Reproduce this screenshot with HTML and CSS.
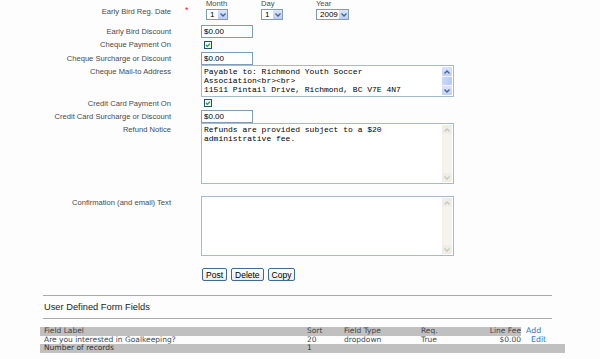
FILE: index.html
```html
<!DOCTYPE html>
<html lang="en">
<head>
    <meta charset="UTF-8">
    <meta name="viewport" content="width=device-width, initial-scale=1.0">
    <link rel="stylesheet" href="styles.css">
    <title>Program Settings</title>
</head>
<body>
    <div class="form">
        <div class="row row-date">
            <div class="label">Early Bird Reg. Date</div>
            <div class="req">*</div>
            <div class="field date-field">
                <div class="date-part part-month">
                    <div class="date-cap">Month</div>
                    <span class="select sel-small"><span class="sel-val">1</span><span class="sel-btn"><svg width="6" height="4" viewBox="0 0 6 4"><path d="M0.5 0.5 L3 3 L5.5 0.5" fill="none" stroke="#4d6185" stroke-width="1.3"/></svg></span></span>
                </div>
                <div class="date-part part-day">
                    <div class="date-cap">Day</div>
                    <span class="select sel-small"><span class="sel-val">1</span><span class="sel-btn"><svg width="6" height="4" viewBox="0 0 6 4"><path d="M0.5 0.5 L3 3 L5.5 0.5" fill="none" stroke="#4d6185" stroke-width="1.3"/></svg></span></span>
                </div>
                <div class="date-part part-year">
                    <div class="date-cap">Year</div>
                    <span class="select sel-year"><span class="sel-val">2009</span><span class="sel-btn"><svg width="6" height="4" viewBox="0 0 6 4"><path d="M0.5 0.5 L3 3 L5.5 0.5" fill="none" stroke="#4d6185" stroke-width="1.3"/></svg></span></span>
                </div>
            </div>
        </div>

        <div class="row row-input">
            <div class="label">Early Bird Discount</div>
            <div class="req"></div>
            <div class="field"><span class="input">$0.00</span></div>
        </div>

        <div class="row row-check">
            <div class="label">Cheque Payment On</div>
            <div class="req"></div>
            <div class="field"><span class="check"><svg width="8" height="8" viewBox="0 0 8 8"><rect x="0.5" y="0.5" width="7" height="7" fill="#f4f4f0" stroke="#1c5180"/><path d="M2 4 L3.4 5.4 L6 2.6" fill="none" stroke="#21a121" stroke-width="1.3"/></svg></span></div>
        </div>

        <div class="row row-input">
            <div class="label">Cheque Surcharge or Discount</div>
            <div class="req"></div>
            <div class="field"><span class="input">$0.00</span></div>
        </div>

        <div class="row row-area area-small">
            <div class="label">Cheque Mail-to Address</div>
            <div class="req"></div>
            <div class="field">
                <div class="area">
                    <div class="area-text">Payable to: Richmond Youth Soccer<br>Association&lt;br&gt;&lt;br&gt;<br>11511 Pintail Drive, Richmond, BC V7E 4N7</div>
                    <div class="scroll">
                        <span class="sbtn"><svg width="6" height="4" viewBox="0 0 6 4"><path d="M0.5 3.5 L3 1 L5.5 3.5" fill="none" stroke="#4d6185" stroke-width="1.3"/></svg></span>
                        <span class="thumb"></span>
                        <span class="sbtn"><svg width="6" height="4" viewBox="0 0 6 4"><path d="M0.5 0.5 L3 3 L5.5 0.5" fill="none" stroke="#4d6185" stroke-width="1.3"/></svg></span>
                    </div>
                </div>
            </div>
        </div>

        <div class="row row-check2">
            <div class="label">Credit Card Payment On</div>
            <div class="req"></div>
            <div class="field"><span class="check"><svg width="8" height="8" viewBox="0 0 8 8"><rect x="0.5" y="0.5" width="7" height="7" fill="#f4f4f0" stroke="#1c5180"/><path d="M2 4 L3.4 5.4 L6 2.6" fill="none" stroke="#21a121" stroke-width="1.3"/></svg></span></div>
        </div>

        <div class="row row-input">
            <div class="label">Credit Card Surcharge or Discount</div>
            <div class="req"></div>
            <div class="field"><span class="input">$0.00</span></div>
        </div>

        <div class="row row-area area-large">
            <div class="label">Refund Notice</div>
            <div class="req"></div>
            <div class="field">
                <div class="area">
                    <div class="area-text">Refunds are provided subject to a $20<br>administrative fee.</div>
                    <div class="scroll off">
                        <span class="sbtn"><svg width="6" height="4" viewBox="0 0 6 4"><path d="M0.5 3.5 L3 1 L5.5 3.5" fill="none" stroke="#c9c7ba" stroke-width="1.3"/></svg></span>
                        <span class="track"></span>
                        <span class="sbtn"><svg width="6" height="4" viewBox="0 0 6 4"><path d="M0.5 0.5 L3 3 L5.5 0.5" fill="none" stroke="#c9c7ba" stroke-width="1.3"/></svg></span>
                    </div>
                </div>
            </div>
        </div>

        <div class="row row-spacer"></div>

        <div class="row row-area area-conf">
            <div class="label">Confirmation (and email) Text</div>
            <div class="req"></div>
            <div class="field">
                <div class="area">
                    <div class="area-text"></div>
                    <div class="scroll off">
                        <span class="sbtn"><svg width="6" height="4" viewBox="0 0 6 4"><path d="M0.5 3.5 L3 1 L5.5 3.5" fill="none" stroke="#c9c7ba" stroke-width="1.3"/></svg></span>
                        <span class="track"></span>
                        <span class="sbtn"><svg width="6" height="4" viewBox="0 0 6 4"><path d="M0.5 0.5 L3 3 L5.5 0.5" fill="none" stroke="#c9c7ba" stroke-width="1.3"/></svg></span>
                    </div>
                </div>
            </div>
        </div>

        <div class="row row-spacer"></div>

        <div class="row row-buttons">
            <div class="label"></div>
            <div class="req"></div>
            <div class="field buttons">
                <button class="btn">Post</button>
                <button class="btn">Delete</button>
                <button class="btn">Copy</button>
            </div>
        </div>
    </div>

    <div class="udf">
        <div class="rule"></div>
        <div class="udf-title">User Defined Form Fields</div>
        <div class="rule"></div>

        <table class="udf-table">
            <tr class="head">
                <td class="c-label">Field Label</td>
                <td class="c-sort">Sort</td>
                <td class="c-type">Field Type</td>
                <td class="c-req">Req.</td>
                <td class="c-fee">Line Fee</td>
                <td class="c-act"><a href="#" class="add">Add</a></td>
            </tr>
            <tr>
                <td class="c-label">Are you interested in Goalkeeping?</td>
                <td class="c-sort">20</td>
                <td class="c-type">dropdown</td>
                <td class="c-req">True</td>
                <td class="c-fee">$0.00</td>
                <td class="c-act"><a href="#" class="edit">Edit</a></td>
            </tr>
            <tr class="foot">
                <td class="c-label">Number of records</td>
                <td class="c-sort">1</td>
                <td class="c-type"></td>
                <td class="c-req"></td>
                <td class="c-fee"></td>
                <td class="c-act"></td>
            </tr>
        </table>
    </div>
</body>
</html>
```

FILE: styles.css
```css
body {
    margin: 0;
    background-color: #fdfdfd;
    font-family: 'Liberation Sans', Arial, sans-serif;
    font-size: 7.6px;
    color: #4a4a4a;
}

.form {
    display: flex;
    flex-direction: column;
}

.row {
    display: grid;
    grid-template-columns: 171px 30px 1fr;
    align-items: center;
}

.label {
    text-align: right;
    white-space: nowrap;
}

.req {
    color: #e02020;
    font-size: 9px;
    padding-left: 14px;
}

.row-date { height: 24px; }
.row-date .label { margin-top: -2px; }
.row-date .req { margin-top: -5px; }
.row-input { height: 14px; }
.row-check { height: 13px; }
.row-check2 { height: 12px; }
.row-spacer { height: 12px; }
.row-buttons { height: 13px; }

.row-area { align-items: start; }
.row-area .label { padding-top: 2px; }
.area-small { height: 32px; }
.area-large { height: 61px; }
.area-conf { height: 60px; }

/* date selects */
.date-field {
    display: flex;
    align-self: start;
    padding-left: 5px;
}

.date-part {
    display: flex;
    flex-direction: column;
}

.part-month, .part-day { width: 55px; }

.date-cap {
    height: 9px;
    line-height: 8px;
}

.select {
    display: flex;
    align-items: center;
    height: 11px;
    border: 1px solid #7f9db9;
    background-color: #fff;
    box-sizing: border-box;
    color: #000;
    font-size: 8px;
}

.sel-small { width: 22px; }
.sel-year { width: 33px; }

.sel-val {
    flex: 1;
    padding-left: 3px;
}

.sel-btn {
    display: flex;
    align-items: center;
    justify-content: center;
    width: 9px;
    height: 9px;
    background: linear-gradient(#dbe5fd, #b9cdf7);
}

/* inputs */
.input {
    display: flex;
    align-items: center;
    width: 52px;
    height: 13px;
    box-sizing: border-box;
    border: 1px solid #7f9db9;
    background-color: #fff;
    padding-left: 2px;
    color: #000;
    font-size: 8px;
}

.check {
    display: flex;
    padding-left: 3px;
}

/* text areas */
.area {
    display: flex;
    width: 253px;
    height: 100%;
    box-sizing: border-box;
    border: 1px solid #a5b9cf;
    background-color: #fff;
}

.area-small .area { height: 32px; }
.area-large .area { height: 61px; }
.area-conf .area { height: 60px; }

.area-text {
    flex: 1;
    padding: 1px 2px;
    font-family: 'Liberation Mono', 'Courier New', monospace;
    font-size: 8px;
    line-height: 9px;
    color: #000;
    white-space: nowrap;
    overflow: hidden;
}

.scroll {
    display: flex;
    flex-direction: column;
    width: 10px;
    margin: 1px 1px 1px 0;
    background-color: #f4f3ee;
}

.sbtn {
    display: flex;
    align-items: center;
    justify-content: center;
    height: 9px;
    background: linear-gradient(#dbe5fd, #bdd0f8);
    border-radius: 1px;
}

.thumb {
    flex: 1;
    margin: 1px 0;
    background: linear-gradient(90deg, #c8d7fb, #b8cbf5);
    border-radius: 1px;
}

.track { flex: 1; }

.scroll.off .sbtn {
    background: #eeede6;
}

/* buttons */
.buttons {
    display: flex;
    gap: 4px;
    padding-left: 1px;
}

.btn {
    height: 13px;
    padding: 0 3px;
    font-family: 'Liberation Sans', Arial, sans-serif;
    font-size: 8.5px;
    line-height: 10px;
    color: #000;
    background: linear-gradient(#ffffff, #ecebe6);
    border: 1px solid #3d6a98;
    border-radius: 2px;
}

/* user defined fields */
.udf {
    padding: 14px 0 0 40px;
}

.rule {
    height: 1px;
    width: 509px;
    margin-left: 3px;
    background-color: #aaaaaa;
}

.udf-title {
    height: 22px;
    line-height: 22px;
    padding-left: 4px;
    font-size: 9.3px;
    color: #222;
}

.udf-table {
    margin-top: 8px;
    width: 525px;
    border-collapse: collapse;
    font-family: 'DejaVu Sans', Verdana, sans-serif;
    font-size: 7.5px;
    color: #3b4a55;
}

.udf-table td {
    height: 8.5px;
    padding: 0 0 0 3px;
    line-height: 8px;
    white-space: nowrap;
}

.udf-table .c-label { width: 260px; padding-left: 4px; }
.udf-table .c-sort { width: 34px; }
.udf-table .c-type { width: 74px; }
.udf-table .c-req { width: 40px; }
.udf-table .c-fee { width: 60px; text-align: right; padding: 0; }
.udf-table .c-act { padding-left: 5px; }

.head td { background-color: #c0c0c0; color: #444; }
.head td.c-act { background-color: transparent; }
.foot td { background-color: #c0c0c0; color: #333; }

.udf-table a {
    color: #3a6fd8;
    text-decoration: none;
    font-size: 7.8px;
}

.udf-table .edit { padding-left: 5px; }
```
